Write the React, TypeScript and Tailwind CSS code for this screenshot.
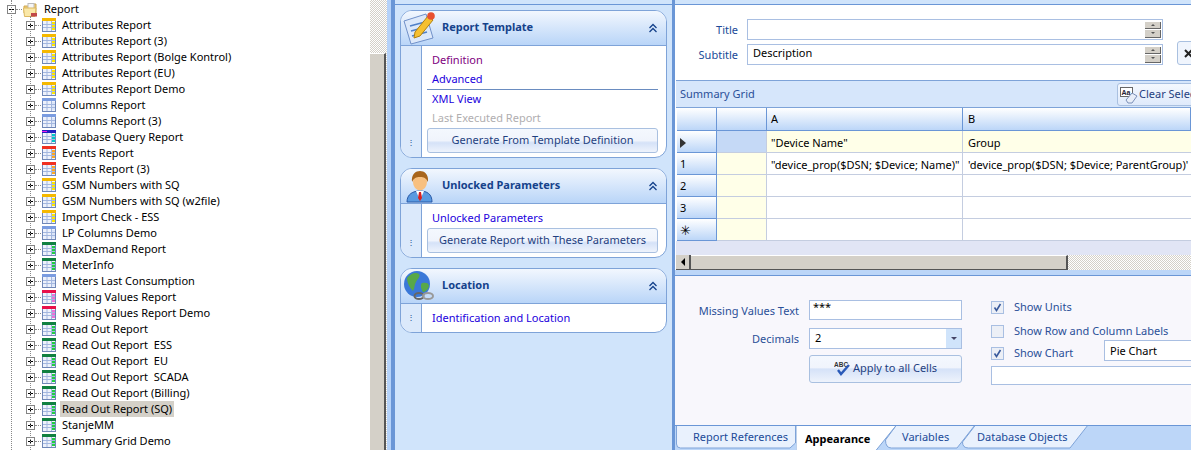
const F = '"Noto Sans", sans-serif';

type C = 'y' | 'b' | 'd' | 'r' | 'm' | 'g';
const items: [string, C][] = [
  ['Attributes Report', 'y'], ['Attributes Report (3)', 'y'], ['Attributes Report (Bolge Kontrol)', 'y'], ['Attributes Report (EU)', 'y'], ['Attributes Report Demo', 'y'],
  ['Columns Report', 'b'], ['Columns Report (3)', 'b'], ['Database Query Report', 'd'], ['Events Report', 'r'], ['Events Report (3)', 'r'],
  ['GSM Numbers with SQ', 'y'], ['GSM Numbers with SQ (w2file)', 'y'], ['Import Check - ESS', 'y'], ['LP Columns Demo', 'b'], ['MaxDemand Report', 'g'],
  ['MeterInfo', 'g'], ['Meters Last Consumption', 'b'], ['Missing Values Report', 'm'], ['Missing Values Report Demo', 'm'], ['Read Out Report', 'g'],
  ['Read Out Report  ESS', 'g'], ['Read Out Report  EU', 'g'], ['Read Out Report  SCADA', 'g'], ['Read Out Report (Billing)', 'g'], ['Read Out Report (SQ)', 'g'],
  ['StanjeMM', 'g'], ['Summary Grid Demo', 'g'],
];

function RepIcon({ c }: { c: C }) {
  const top = { y: '#f5b800', b: '#7a9ce0', d: '#2020c0', r: '#f03020', m: '#e8104a', g: '#108040' }[c];
  const acc = { y: '#ffe800', b: '#dbe5f8', d: '#00c8c8', r: '#ffa820', m: '#f070d8', g: '#20d040' }[c];
  return (
    <svg width="15" height="14" viewBox="0 0 15 14" className="shrink-0">
      <rect x="0.5" y="0.5" width="13" height="13" fill="#eef2fb" stroke="#7088b8" />
      <rect x="0" y="0" width="14" height="3" fill={top} />
      <path d="M1 6.5h12M1 9.5h12M5 3v10M9.5 3v10" stroke="#a4b8e0" strokeWidth="1" />
      {c === 'd' && <path d="M0 1.5h5" stroke="#f020f0" />}
      <rect x="10" y="4" width="3" height="2" fill={acc} />
      <rect x="10" y="7" width="3" height="2" fill={acc} />
      <rect x="10" y="10" width="3" height="2" fill={acc} />
    </svg>
  );
}

function Exp({ minus }: { minus?: boolean }) {
  return (
    <svg width="9" height="9" viewBox="0 0 9 9" className="shrink-0">
      <rect x="0.5" y="0.5" width="8" height="8" fill="#fff" stroke="#848484" />
      <path d={minus ? 'M2 4.5h5' : 'M2 4.5h5M4.5 2v5'} stroke="#000" />
    </svg>
  );
}

function Tree() {
  return (
    <div className="w-[370px] h-[450px] shrink-0 bg-white overflow-hidden relative text-black text-[11px]">
      <div className="absolute left-[11px] top-0 h-[450px] border-l border-dotted border-[#888]" />
      <div className="absolute left-[30px] top-[16px] h-[434px] border-l border-dotted border-[#888]" />
      <div className="h-[17px] pt-[2px] flex items-center pl-[7px]">
        <Exp minus />
        <span className="w-[6px] mr-[1px] border-t border-dotted border-[#888]" />
        <svg width="15" height="14" viewBox="0 0 15 14" className="shrink-0">
          <path d="M1 3h5l1-2h6v9H1z" fill="#f0cc70" stroke="#d0a850" />
          <rect x="5" y="0.5" width="6" height="7" fill="#f6f6f6" stroke="#bbb" />
          <path d="M0.5 5h12.5l-1 8.5H1.5z" fill="#fae8a8" stroke="#dcb860" />
          <rect x="8" y="10" width="6" height="3.5" fill="#c04848" />
        </svg>
        <span className="ml-[5px] pl-[1px]">Report</span>
      </div>
      {items.map(([t, c]) => (
        <div key={t} className="h-[16px] flex items-center pl-[26px]">
          <Exp />
          <span className="w-[6px] border-t border-dotted border-[#888] mr-[1px]" />
          <RepIcon c={c} />
          <span className={'ml-[3px] px-[2px] h-[16px] leading-[15px] whitespace-pre ' + (t === 'Read Out Report (SQ)' ? 'bg-[#d4d0c8]' : '')}>{t}</span>
        </div>
      ))}
    </div>
  );
}

function Chevron() {
  return (
    <svg width="10" height="10" viewBox="0 0 10 10">
      <path d="M1.5 5 5 1.5 8.5 5M1.5 9 5 5.5 8.5 9" fill="none" stroke="#15428b" strokeWidth="1.3" />
    </svg>
  );
}

function Btn({ label }: { label: string }) {
  return (
    <div className="w-full h-[25px] rounded-[3px] border border-[#a9c0e0] bg-[linear-gradient(#f4f8fe_0%,#f0f4fc_50%,#d5e2f8_60%,#eef3fc_100%)] flex items-center justify-center text-[#1f3f80] text-[11px]">{label}</div>
  );
}

function Group({ title, icon, h, children }: { title: string; icon: React.ReactNode; h: string; children: React.ReactNode }) {
  return (
    <div className={'mx-[5px] relative rounded-[12px] border border-[#7ea3d8] bg-white overflow-hidden flex flex-col ' + h}>
      <div className="h-[35px] shrink-0 pl-[41px] pr-[8px] flex items-center justify-between border-b border-[#7ea3d8] bg-[linear-gradient(#f2f7fe,#b9d5f8)]">
        <span className="font-bold text-[11px] text-[#15428b] pb-[2px]">{title}</span>
        <Chevron />
      </div>
      <div className="flex-1 flex min-h-0">
        <div className="w-[21px] shrink-0 border-r border-[#7ea3d8] bg-[#dbe9fb] flex items-end justify-center pb-[11px]">
          <span className="text-[8px] leading-[8px] text-[#15428b]">⋮</span>
        </div>
        <div className="flex-1 min-w-0 pl-[5px] pr-[8px]">{children}</div>
      </div>
      <div className="absolute left-0 top-0">{icon}</div>
    </div>
  );
}

const PencilIcon = (
  <svg width="36" height="36" viewBox="0 0 36 36">
    <path d="M3 10 25 3l7 24-22 6z" fill="#dce8fa" stroke="#7090c8" />
    <path d="M9 15l15-4M10 20l15-4M11 25l15-4" stroke="#5080c8" strokeWidth="1.6" />
    <path d="M14 21 27 5l5 4-13 16-6 2z" fill="#f6c030" stroke="#b08010" />
    <circle cx="30" cy="5" r="3.8" fill="#e85030" />
  </svg>
);
const PersonIcon = (
  <svg width="36" height="36" viewBox="0 0 36 36">
    <path d="M6 33c0-8 6-11 13-11s12 3 12 11z" fill="#5a9ae0" stroke="#2a5aa8" />
    <path d="M15 22h8l-4 9z" fill="#fff" />
    <path d="M18 23h2l1 6-2 3-2-3z" fill="#d82020" />
    <ellipse cx="19" cy="13" rx="7" ry="8.5" fill="#f8c080" />
    <path d="M11 13c-1-8 4-11 8-11s9 3 8 11c-2-4-4-5-8-5s-6 1-8 5z" fill="#a8651c" />
  </svg>
);
const GlobeIcon = (
  <svg width="36" height="36" viewBox="0 0 36 36">
    <circle cx="16" cy="15" r="13" fill="#3a78d8" />
    <path d="M6 9c4-5 9-6 12-4 2 3-2 5-3 8-2 3-1 6-3 9-3-3-6-8-6-13zM21 14c4-1 7 0 7 3-1 4-4 6-6 6-2-3-3-7-1-9z" fill="#58a848" />
    <ellipse cx="18" cy="27" rx="4.5" ry="3" fill="none" stroke="#666" strokeWidth="2" />
    <ellipse cx="27" cy="27" rx="5" ry="3" fill="none" stroke="#999" strokeWidth="2" />
  </svg>
);

function Middle() {
  const link = 'h-[19px] pl-[5px] flex items-center text-[11px] text-[#2200dd]';
  return (
    <div className="w-[277px] h-[450px] shrink-0 bg-[#d0e4fb] flex flex-col">
      <div className="h-[5px] shrink-0 border-b border-[#6a96d6] bg-[#d0e4fb] mb-[5px]" />
      <Group title="Report Template" icon={PencilIcon} h="h-[148px]">
        <div className="pt-[5px]">
          <div className={link + ' text-[#800080]'}>Definition</div>
          <div className={link}>Advanced</div>
          <div className="border-t border-[#6a8cc0]" />
          <div className={link}>XML View</div>
          <div className={link + ' text-[#b0aeb0]'}>Last Executed Report</div>
          <Btn label="Generate From Template Definition" />
        </div>
      </Group>
      <div className="h-[10px] shrink-0" />
      <Group title="Unlocked Parameters" icon={PersonIcon} h="h-[90px]">
        <div className="pt-[5px]">
          <div className={link}>Unlocked Parameters</div>
          <Btn label="Generate Report with These Parameters" />
        </div>
      </Group>
      <div className="h-[10px] shrink-0" />
      <Group title="Location" icon={GlobeIcon} h="h-[65px]">
        <div className={link + ' mt-[5px]'}>Identification and Location</div>
      </Group>
    </div>
  );
}

function Spin() {
  return (
    <div className="w-[16px] h-[16px] flex flex-col gap-px shrink-0">
      <div className="h-[8px] bg-[#d4d0c8] border-b border-r border-[#666] flex items-center justify-center"><span className="w-0 h-0 border-x-[2px] border-x-transparent border-b-[2px] border-b-[#555]" /></div>
      <div className="h-[8px] bg-[#d4d0c8] border-b border-r border-[#666] flex items-center justify-center"><span className="w-0 h-0 border-x-[2px] border-x-transparent border-t-[2px] border-t-[#555]" /></div>
    </div>
  );
}

function Field({ label, value }: { label: string; value: string }) {
  return (
    <div className="flex items-center">
      <div className="w-[63px] pt-[2px] text-right text-[11px] text-[#204a98]">{label}</div>
      <div className="ml-[9px] w-[416px] h-[21px] border border-[#a9bfe2] bg-white flex items-center justify-between pl-[5px] pr-[1px] text-[11px] text-black">
        <span className="pb-[3px]">{value}</span>
        <Spin />
      </div>
    </div>
  );
}

const hdr = 'bg-[linear-gradient(#fff,#bcd6f8)] border-r border-b border-[#6a96d6]';

function GridRow({ head, first, a, b, cls }: { head: React.ReactNode; first?: boolean; a: string; b: string; cls?: string }) {
  return (
    <div className="h-[22px] flex text-[11px] text-black shrink-0">
      <div className={'w-[40px] shrink-0 flex items-center pl-[3px] pt-[2px] ' + hdr}>{head}</div>
      <div className={'w-[50px] shrink-0 border-r border-b border-[#c4cde0] ' + (first ? 'bg-[#c5d9f6]' : 'bg-[#ffffe8]')} />
      <div className={'w-[196px] shrink-0 pl-[4px] pt-[3px] flex items-center border-r border-b border-[#c4cde0] whitespace-pre ' + (cls ?? 'bg-white')}>{a}</div>
      <div className={'flex-1 pl-[5px] pt-[3px] flex items-center border-b border-[#c4cde0] whitespace-pre ' + (cls ?? 'bg-white')}>{b}</div>
    </div>
  );
}

function Check({ on }: { on?: boolean }) {
  return (
    <div className="w-[13px] h-[13px] shrink-0 border border-[#a9bfe2] bg-[#eceff6] flex items-center justify-center">
      {on && (
        <svg width="9" height="9" viewBox="0 0 9 9"><path d="M1.5 4.5 3.5 7.5 7.5 1" fill="none" stroke="#3a5a9c" strokeWidth="1.6" /></svg>
      )}
    </div>
  );
}

function Tab({ label, w, cls, pad, path, active }: { label: string; w: string; cls: string; pad: string; path: string; active?: boolean }) {
  return (
    <div className={w + ' h-[24px] shrink-0 relative text-[11px] leading-[15px] whitespace-nowrap ' + cls}>
      <svg width="130" height="24" viewBox="0 0 130 24" className="absolute left-0 top-0">
        <path d={path} fill={active ? '#ffffff' : '#e9f1fd'} stroke="#7ea3d8" />
      </svg>
      <span className={'relative block ' + pad}>{label}</span>
    </div>
  );
}

function Right() {
  const dither = 'bg-[repeating-conic-gradient(#d4d0c8_0_25%,#ffffff_0_50%)] bg-[length:2px_2px]';
  return (
    <div className="flex-1 min-w-0 h-[450px] border-l-[3px] border-[#6a96d6] bg-white flex flex-col overflow-hidden">
      <div className="h-[5px] shrink-0 bg-[#d0e4fb] border-b border-[#6a96d6]" />
      <div className="h-[75px] shrink-0 bg-white pt-[14px] relative flex flex-col gap-[4px]">
        <Field label="Title" value="" />
        <Field label="Subtitle" value="Description" />
        <div className="absolute left-[502px] top-[36px] w-[40px] h-[24px] rounded-[3px] border border-[#a9c0e0] bg-[#f0f5fd] flex items-center pl-[6px]">
          <svg width="9" height="9" viewBox="0 0 9 9"><path d="M1 1l7 7M8 1 1 8" stroke="#222" strokeWidth="2" /></svg>
        </div>
      </div>
      <div className="h-[28px] shrink-0 ml-px bg-[#d6e6fb] border-y border-[#7ea3d8] flex items-center pl-[4px] text-[11px] text-[#2a4f98] relative">
        Summary Grid
        <div className="absolute left-[441px] top-[2px] w-[110px] h-[23px] rounded-[3px] border border-[#a9c0e0] bg-[linear-gradient(#f4f8fe,#dfeafb)] flex items-center pl-[2px] gap-[1px] whitespace-nowrap text-[#1f3f80]">
          <svg width="18" height="18" viewBox="0 0 18 18" className="shrink-0">
            <rect x="0.5" y="1.5" width="12" height="9" fill="#fff" stroke="#666" />
            <text x="1.5" y="9" fontSize="7" fontWeight="700" fill="#223" fontFamily='"Liberation Sans", sans-serif'>Aa</text>
            <path d="M6 14l6-7 5 3-5 7H8z" fill="#e8eef8" stroke="#7a8fb8" />
          </svg>
          Clear Selection
        </div>
      </div>
      <div className="flex flex-col shrink-0 ml-[2px]">
        <div className="h-[23px] flex text-[11px] text-black shrink-0">
          <div className={'w-[40px] shrink-0 ' + hdr} />
          <div className={'w-[50px] shrink-0 ' + hdr} />
          <div className={'w-[196px] shrink-0 pl-[4px] flex items-center ' + hdr}>A</div>
          <div className={'flex-1 pl-[5px] flex items-center ' + hdr}>B</div>
        </div>
        <GridRow first cls="bg-[#ffffe8]" a={'"Device Name"'} b="Group" head={<span className="w-0 h-0 border-y-[5px] border-y-transparent border-l-[6px] border-l-[#333]" />} />
        <GridRow a={'"device_prop($DSN; $Device; Name)"'} b={"'device_prop($DSN; $Device; ParentGroup)'"} head="1" />
        <GridRow a="" b="" head="2" />
        <GridRow a="" b="" head="3" />
        <GridRow a="" b="" head={<span className="text-[13px]">✳</span>} />
      </div>
      <div className="h-[14px] shrink-0 ml-px bg-[#e1e5f5]" />
      <div className={'h-[15px] shrink-0 ml-px flex ' + dither}>
        <div className="w-[15px] bg-[#d4d0c8] border-r-2 border-b border-[#555] flex items-center justify-center">
          <span className="w-0 h-0 border-y-[4px] border-y-transparent border-r-[4px] border-r-black" />
        </div>
        <div className="w-[377px] bg-[#d4d0c8] border-r-2 border-b border-[#555] border-t border-t-white" />
      </div>
      <div className="h-[6px] shrink-0 bg-[#bcd6f8] border-b border-[#6a96d6]" />
      <div className="flex-1 min-h-0 bg-[#f8f7fc] relative flex pt-[24px] text-[11px] text-[#2a4f98]">
        <div className="w-[124px] shrink-0 flex flex-col items-end">
          <div className="h-[21px] pt-[1px] flex items-center">Missing Values Text</div>
          <div className="h-[21px] pt-[1px] mt-[7px] flex items-center">Decimals</div>
        </div>
        <div className="w-[153px] ml-[10px] shrink-0 flex flex-col">
          <div className="h-[20px] border border-[#a9bfe2] bg-white text-black pl-[3px] leading-[12px]">***</div>
          <div className="h-[21px] mt-[8px] border border-[#a9bfe2] bg-white text-black pl-[5px] flex items-center justify-between">
            2
            <div className="w-[15px] h-full bg-[#d0e4fb] flex items-center justify-center"><span className="w-0 h-0 border-x-[3px] border-x-transparent border-t-[3px] border-t-[#446]" /></div>
          </div>
          <div className="h-[28px] mt-[6px] pb-[2px] rounded-[3px] border border-[#a9c0e0] bg-[linear-gradient(#f4f8fe_0%,#f0f4fc_45%,#d5e2f8_50%,#eef3fc_100%)] flex items-center justify-center gap-[2px] text-[#1f3f80]">
            <svg width="17" height="15" viewBox="0 0 17 15">
              <text x="0" y="6" fontSize="6.5" fontWeight="700" fill="#333" fontFamily='"Liberation Sans", sans-serif'>ABC</text>
              <path d="M4 9l3 4 8-9" fill="none" stroke="#2a5ab8" strokeWidth="2.4" />
            </svg>
            Apply to all Cells
          </div>
        </div>
        <div className="w-[200px] ml-[29px] shrink-0 flex flex-col">
          <div className="h-[13px] mt-[1px] flex items-center gap-[10px] whitespace-nowrap"><Check on />Show Units</div>
          <div className="h-[13px] mt-[11px] flex items-center gap-[10px] whitespace-nowrap"><Check />Show Row and Column Labels</div>
          <div className="h-[13px] mt-[9px] flex items-center gap-[10px] whitespace-nowrap relative">
            <Check on />Show Chart
            <div className="absolute left-[113px] top-[-7px] w-[100px] h-[21px] border border-[#a9bfe2] bg-white text-black pl-[5px] pt-[2px] flex items-center">Pie Chart</div>
          </div>
          <div className="h-[19px] mt-[6px] w-[210px] border border-[#a9bfe2] bg-white" />
        </div>
      </div>
      <div className="h-[25px] shrink-0 bg-[#bcd6f8] border-t border-[#6a96d6] flex pl-px text-[#204a98]">
        <Tab label="Report References" w="w-[120px]" cls="z-[2]" pad="pl-[17px] pt-[3px]" path="M0.5 -1V18Q0.5 22 4.5 22H114L119.5 17V-1" />
        <Tab label="Appearance" active w="w-[100px]" cls="z-[3] font-bold text-black" pad="pl-[9px] pt-[5px]" path="M0 -1H100.5L79.5 25H0Z" />
        <Tab label="Variables" w="w-[90px] -ml-[11px]" cls="z-[2]" pad="pl-[17px] pt-[3px]" path="M11.5 -1L0.5 14Q0.5 22 6.5 22H72L90 -1" />
        <Tab label="Database Objects" w="w-[126px] -ml-[13px]" cls="z-[1]" pad="pl-[15px] pt-[3px]" path="M13.5 -1L0.5 16Q0.5 22 6.5 22H108L126 -1" />
      </div>
    </div>
  );
}

export default function App() {
  return (
    <div className="w-[1191px] h-[450px] overflow-hidden flex" style={{ fontFamily: F }}>
      <Tree />
      <div className="w-[17px] h-[450px] shrink-0 flex flex-col bg-[repeating-conic-gradient(#d4d0c8_0_25%,#ffffff_0_50%)] bg-[length:2px_2px]">
        <div className="h-[53px] shrink-0" />
        <div className="flex-1 mr-px bg-[#d4d0c8] border-t border-white border-r-2 border-r-[#555]" />
      </div>
      <div className="w-[8px] h-[450px] shrink-0 bg-[linear-gradient(90deg,#b5d2f9_0,#b5d2f9_4px,#6a96d6_4px,#6a96d6_100%)]" />
      <Middle />
      <Right />
    </div>
  );
}
